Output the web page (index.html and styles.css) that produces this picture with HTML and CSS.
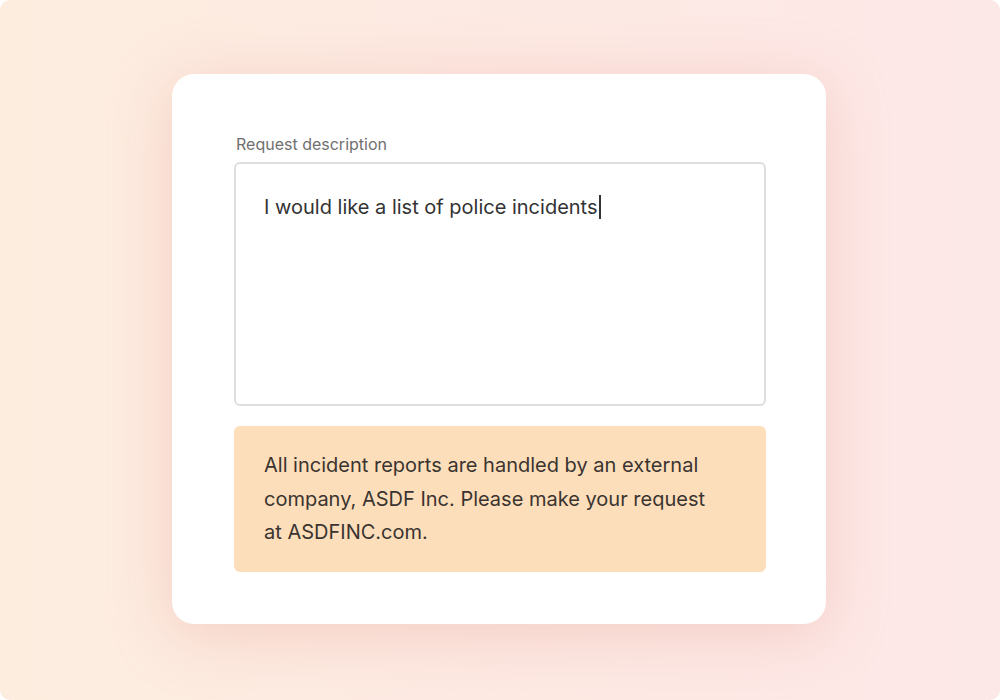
FILE: index.html
```html
<!DOCTYPE html>
<html>
<head>
<meta charset="utf-8">
<link rel="stylesheet" href="styles.css">
</head>
<body>
<div class="stage">
  <div class="card">
    <label class="label">Request description</label>
    <div class="textarea"><span class="typed">I would like a list of police incidents</span><span class="caret"></span></div>
    <div class="alert">All incident reports are handled by an external company, ASDF Inc. Please make your request at ASDFINC.com.</div>
  </div>
</div>
</body>
</html>
```
FILE: styles.css
```css
html, body {
  margin: 0;
  padding: 0;
  background: #ffffff;
}
body {
  font-family: Inter, "Noto Sans", sans-serif;
}
.stage {
  width: 1000px;
  height: 700px;
  border-radius: 10px;
  overflow: hidden;
  background: linear-gradient(90deg, #fdeddf 0%, #fde9e3 55%, #fde8e8 100%);
  display: flex;
  justify-content: flex-start;
  align-items: flex-start;
  padding: 74px 0 0 172px;
  box-sizing: border-box;
}
.card {
  width: 654px;
  height: 550px;
  box-sizing: border-box;
  background: #ffffff;
  border-radius: 22px;
  box-shadow: 0 10px 60px rgba(235, 170, 160, 0.45);
  padding: 60px 60px 0 62px;
  display: flex;
  flex-direction: column;
}
.label {
  font-size: 16px;
  color: #707070;
  line-height: 20px;
  margin-left: 2px;
  margin-bottom: 8px;
}
.textarea {
  height: 244px;
  box-sizing: border-box;
  border: 2px solid #dedede;
  border-radius: 6px;
  padding: 28px 28px;
  font-size: 20px;
  line-height: 30px;
  color: #333333;
}
.caret {
  display: inline-block;
  width: 2px;
  height: 24px;
  background: #333;
  vertical-align: -5px;
  margin-left: 1px;
}
.alert {
  margin-top: 20px;
  height: 146px;
  box-sizing: border-box;
  background: #fddebb;
  border-radius: 6px;
  padding: 23px 50px 0 30px;
  font-size: 20px;
  line-height: 33.5px;
  color: #3a3430;
}
```
